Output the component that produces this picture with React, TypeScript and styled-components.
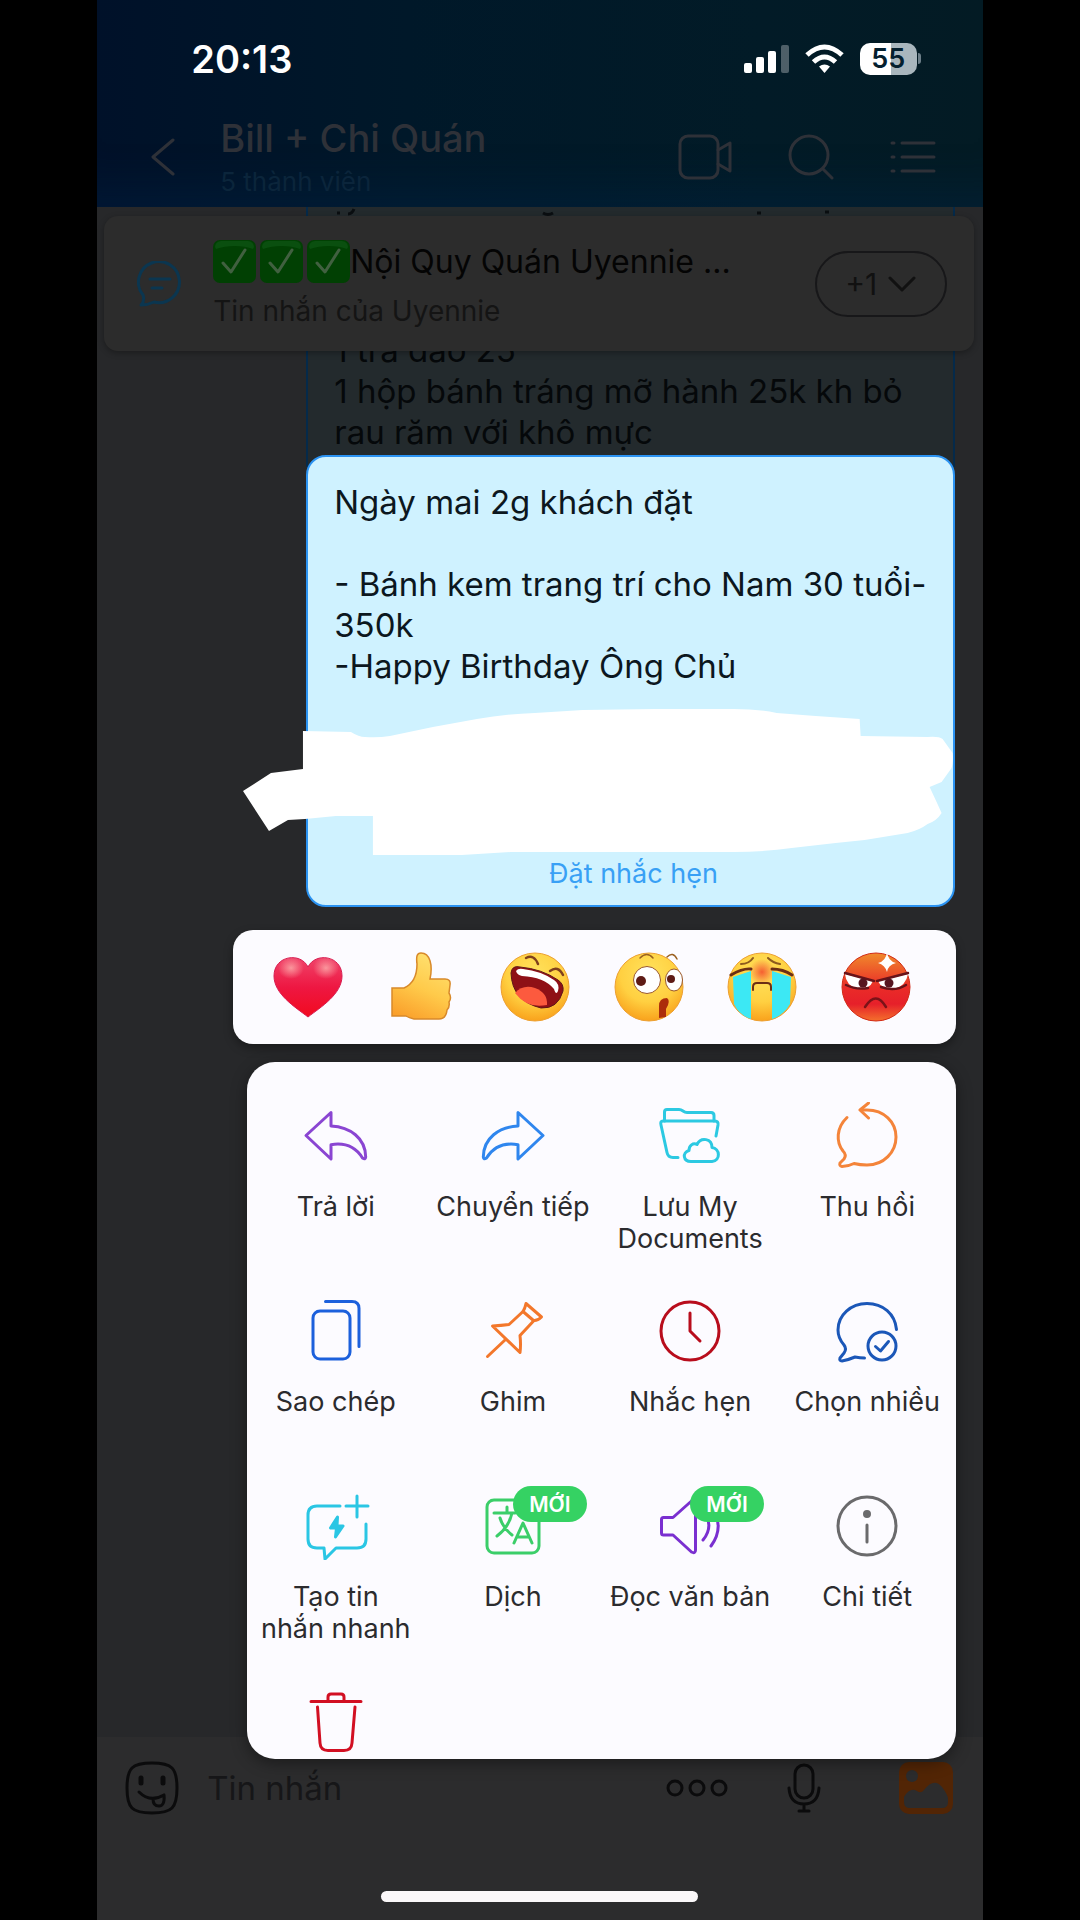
import React from "react";
import styled, { createGlobalStyle } from "styled-components";

const GlobalStyle = createGlobalStyle`
  * { box-sizing: border-box; }
  html, body { margin: 0; padding: 0; background: #000; }
  body { font-family: Inter, "Noto Sans", sans-serif; }
  button, input { font: inherit; color: inherit; background: none; border: 0; padding: 0; margin: 0; }
  svg { display: block; flex: none; }
  h1, h2, p { margin: 0; font-weight: 400; }
`;

const Page = styled.div`
  display: flex;
  justify-content: center;
  min-height: 100vh;
`;

const Phone = styled.div`
  position: relative;
  display: flex;
  flex-direction: column;
  width: 82%;
  background: #27282a;
`;

/* ---------- header ---------- */

const Header = styled.header`
  color: #2e3138;
  background: linear-gradient(90deg, #001129 0%, #001829 35%, #021b27 75%, #031b24 100%);
  box-shadow: inset 0 -60px 40px -40px rgba(0, 40, 80, 0.3);
`;

const StatusBar = styled.div`
  display: flex;
  align-items: center;
  justify-content: space-between;
  height: 117px;
  padding: 0 62px 0 94px;
  color: #fff;
`;

const Time = styled.time`
  font-size: 38px;
  line-height: 44px;
  font-weight: 600;
`;

const StatusIcons = styled.div`
  display: flex;
  align-items: center;
  gap: 16px;
`;

const Battery = styled.div`
  display: flex;
  align-items: center;
  gap: 1px;
`;

const BatteryBody = styled.div`
  width: 57px;
  height: 32px;
  border-radius: 10px;
  background: linear-gradient(90deg, #fff 54%, #a9b6bd 54%);
  color: #04202f;
  font-size: 27px;
  line-height: 32px;
  font-weight: 600;
  text-align: center;
`;

const BatteryNub = styled.div`
  width: 3px;
  height: 11px;
  border-radius: 0 4px 4px 0;
  background: #6d7f89;
`;

const NavBar = styled.nav`
  display: flex;
  align-items: center;
  height: 90px;
  padding: 0 47px 10px 54px;
`;

const Titles = styled.div`
  flex: 1;
  display: flex;
  flex-direction: column;
  gap: 6px;
  padding-left: 44px;
`;

const Title = styled.h1`
  font-size: 38px;
  line-height: 44px;
  font-weight: 500;
`;

const Members = styled.p`
  font-size: 26px;
  line-height: 32px;
  color: #0b253b;
`;

const NavActions = styled.div`
  display: flex;
  align-items: center;
  gap: 56px;
`;

const IconButton = styled.button`
  display: flex;
  align-items: center;
`;

/* ---------- conversation ---------- */

const Conversation = styled.main`
  position: relative;
  flex: 1;
`;

const Pinned = styled.section`
  position: absolute;
  top: 9px;
  left: 7px;
  right: 9px;
  display: flex;
  align-items: center;
  height: 135px;
  padding: 0 27px 0 33px;
  border-radius: 14px;
  background: #2c2c2c;
  box-shadow: 0 2px 6px rgba(0, 0, 0, 0.3);
`;

const PinnedText = styled.div`
  flex: 1;
  display: flex;
  flex-direction: column;
  gap: 12px;
  padding-left: 30px;
`;

const PinnedTitle = styled.h2`
  display: flex;
  align-items: center;
  font-size: 32px;
  line-height: 41px;
  color: #040404;
  white-space: nowrap;
`;

const Checks = styled.span`
  display: flex;
  gap: 4px;
`;

const PinnedSource = styled.p`
  font-size: 28px;
  line-height: 32px;
  color: #141414;
`;

const MorePins = styled.button`
  display: flex;
  align-items: center;
  justify-content: center;
  gap: 11px;
  width: 132px;
  height: 66px;
  border: 2px solid #171719;
  border-radius: 33px;
  font-size: 30px;
  color: #111;
`;

const OlderBubble = styled.div`
  margin: 0 28px 0 209px;
  height: 260px;
  padding: 123px 20px 0 26px;
  border: solid #052a4a;
  border-width: 0 2px;
  background: #232a2d;
  color: #05080a;
  font-size: 33px;
  line-height: 41px;
`;

const OlderTail = styled.svg`
  position: absolute;
  top: 0;
  left: 240px;
`;

/* ---------- composer ---------- */

const Composer = styled.footer`
  display: flex;
  flex-direction: column;
  align-items: center;
  justify-content: space-between;
  height: 183px;
  padding: 24px 29px 18px 28px;
  background: #2c2c2d;
`;

const ComposerRow = styled.form`
  display: flex;
  align-items: center;
  width: 100%;
`;

const MessageInput = styled.input`
  flex: 1;
  min-width: 0;
  padding-left: 28px;
  font-size: 33px;
  line-height: 41px;
  outline: none;
  &::placeholder { color: #161618; opacity: 1; }
`;

const ComposerActions = styled.div`
  display: flex;
  align-items: center;
  gap: 59px;
`;

const HomeIndicator = styled.div`
  width: 317px;
  height: 11px;
  border-radius: 6px;
  background: #fbf8f9;
`;

/* ---------- focused message overlay ---------- */

const Overlay = styled.div`
  position: absolute;
  inset: 0;
  padding: 455px 27px 0 136px;
`;

const FocusedBubble = styled.article`
  margin: 0 1px 0 73px;
  padding: 25px 20px 15px 26px;
  border: 2px solid #2b93f2;
  border-radius: 20px;
  background: #cff2ff;
  color: #0c171e;
`;

const MessageText = styled.p`
  font-size: 33px;
  line-height: 41px;
  white-space: pre-line;
`;

const Redaction = styled.svg`
  width: calc(100% + 111px);
  height: 148px;
  margin: 21px 0 2px -91px;
`;

const ReminderButton = styled.button`
  display: block;
  margin: 0 auto;
  font-size: 27px;
  line-height: 32px;
  color: #38a0f5;
`;

const Reactions = styled.div`
  display: flex;
  align-items: center;
  justify-content: space-between;
  height: 114px;
  margin-top: 23px;
  padding: 0 45px 0 40px;
  border-radius: 20px;
  background: #fcfbff;
  box-shadow: 0 4px 10px rgba(0, 0, 0, 0.35);
`;

const Menu = styled.div`
  display: grid;
  grid-template-columns: repeat(4, 1fr);
  grid-template-rows: repeat(3, 195px) 72px;
  margin: 18px 0 0 14px;
  padding-top: 40px;
  border-radius: 28px;
  background: #fcfbff;
  box-shadow: 0 4px 16px rgba(0, 0, 0, 0.4);
`;

const MenuItem = styled.button`
  display: flex;
  flex-direction: column;
  align-items: center;
  gap: 21px;
  font-size: 27px;
  line-height: 32px;
  color: #2b2b2e;
  text-align: center;
  white-space: pre;
`;

const IconBox = styled.span<{ $color: string }>`
  position: relative;
  color: ${(p) => p.$color};
`;

const NewBadge = styled.span`
  position: absolute;
  top: -6px;
  left: 34px;
  width: 74px;
  height: 36px;
  border-radius: 18px;
  background: #35d263;
  color: #fff;
  font-size: 21px;
  line-height: 38px;
  font-weight: 600;
`;

/* ---------- drawings ---------- */

const stroke = {
  fill: "none",
  stroke: "currentColor",
  strokeLinecap: "round" as const,
  strokeLinejoin: "round" as const,
};

function Check() {
  return (
    <svg width="43" height="43" viewBox="0 0 43 43" aria-hidden="true">
      <rect width="43" height="43" rx="7" fill="#014003" />
      <path d="M2 7a6 6 0 0 1 6-6h27a6 6 0 0 1 6 6l-1 2C30 5 14 5 3 9z" fill="#0a4f0f" />
      <path d="M10 23l8 9L32 10" {...stroke} stroke="#416040" strokeWidth="3" />
    </svg>
  );
}

type Action = {
  label: string;
  name?: string;
  color: string;
  isNew?: boolean;
  art: React.ReactNode;
};

const actions: Action[] = [
  {
    label: "Trả lời",
    color: "#8a45d2",
    art: <path d="M29 10.500L4 33.500 29 57V42.700C42 40.500 53 44 60.500 56q3 2 3.200-1C63.500 36 48 25 29 24z" />,
  },
  {
    label: "Chuyển tiếp",
    color: "#2f86ee",
    art: <path d="M39 10.500L64 33.500 39 57V42.700C26 40.500 15 44 7.500 56q-3 2-3.200-1C4.500 36 20 25 39 24z" />,
  },
  {
    label: "Lưu My\nDocuments",
    color: "#2cc9e2",
    art: (
      <>
        <path d="M8.500 19V10q0-2.500 2.500-2.500h12q2 0 4 1.500t4 1.500h24q3 0 3 3V19" />
        <path d="M22 55.500h-5q-5 0-6-5L5 23q-1-4 2-4h52q3.500 0 3 4l-2 11" />
        <path d="M35 59.500c-8 0-9-9-2-11 0-5 4-8 8-6 4-8 15-6 15 3 8 1 9 13 0 14z" />
      </>
    ),
  },
  {
    label: "Thu hồi",
    color: "#f4843a",
    art: (
      <>
        <path d="M14 15.500C3 26 3 40 10 49q4 4 1 8l-4 4q-1 3 2 3.500 6 0 12-3 6 1.500 13 1.500c17 0 29-13 29-28S51 8 34 8h-6" />
        <path d="M35.500 1L27 8l8.500 8" />
      </>
    ),
  },
  {
    label: "Sao chép",
    color: "#1c60dc",
    art: (
      <>
        <rect x="11" y="14" width="37" height="48" rx="7" />
        <path d="M23.500 4.500H50q7 0 7 7v38" />
      </>
    ),
  },
  {
    label: "Ghim",
    color: "#f3772b",
    art: (
      <>
        <path d="M47 6.500L62.500 20q-4 4-8 3.500L44 14.500q2-3 3-8z" />
        <path d="M44 14.500L30 27.500q-8 1-16.500 1.500L41 55.500q1-8 0-17l14-15" />
        <path d="M26 43L8.500 59.500" />
      </>
    ),
  },
  {
    label: "Nhắc hẹn",
    color: "#b80d1c",
    art: (
      <>
        <circle cx="34" cy="34" r="29" />
        <path d="M34 16v18l10 10" />
      </>
    ),
  },
  {
    label: "Chọn nhiều",
    color: "#1b57b8",
    art: (
      <>
        <path d="M63.500 32.500C62 17 50 6.500 34 6.500S5 18 5 33q0 8 6 15 3 4 0 8l-4 5q-1 3 2 3 6-1 13-4 5 1 9.500 1" />
        <circle cx="49" cy="49" r="14" />
        <path d="M42.500 49.500l5 4.500 8-9.500" />
      </>
    ),
  },
  {
    label: "Tạo tin\nnhắn nhanh",
    color: "#2ac6e4",
    art: (
      <>
        <path d="M38 14H15q-9 0-9 9v24q0 9 9 9h7l1 11 11-11h21q9 0 9-9V32" />
        <path d="M55 4v21M44 14h22" />
        <path d="M35.500 25l-7 11h6l-1 9 7.500-11h-6z" fill="currentColor" />
      </>
    ),
  },
  {
    label: "Dịch",
    color: "#3bce69",
    isNew: true,
    art: (
      <>
        <rect x="8" y="8" width="52" height="53" rx="7" />
        <path d="M15 21h21M28 15v6M33 21q-3 14-15 23M21 26q3 10 12 17M35 51l9-20 9 20M38 45h12" />
      </>
    ),
  },
  {
    label: "Đọc văn bản",
    color: "#7a2fd0",
    isNew: true,
    art: (
      <>
        <path d="M17 25.500H7.500q-2 0-2 2V41q0 2 2 2H17l18.500 17q4 2 4-2V10q0-4-4-1z" />
        <path d="M50 22q7 14-3 26M59 20q8 18-4 34" />
      </>
    ),
  },
  {
    label: "Chi tiết",
    color: "#6a6a6c",
    art: (
      <>
        <circle cx="34" cy="34" r="29" />
        <circle cx="34" cy="22" r="2.500" fill="currentColor" />
        <path d="M34 33v17" />
      </>
    ),
  },
  {
    label: "",
    name: "Xóa",
    color: "#d20f22",
    art: (
      <>
        <path d="M9 14.500h50M26 14V10q0-3 3-3h10q3 0 3 3v4" />
        <path d="M15.500 20L18 56q.500 7.500 8 7.500h16q7.500 0 8-7.500l3-36" />
      </>
    ),
  },
];

const reactions: { name: string; art: React.ReactNode }[] = [
  {
    name: "Yêu thích",
    art: (
      <>
        <path d="M35 65C22 55 1 42 1 24 1 3 28 0 35 15 42 0 69 3 69 24c0 18-21 31-34 41z" fill="url(#heart)" stroke="#d81b50" />
        <ellipse cx="18" cy="16" rx="13" ry="11" fill="url(#shine)" />
        <ellipse cx="53" cy="16" rx="13" ry="11" fill="url(#shine)" />
      </>
    ),
  },
  {
    name: "Thích",
    art: (
      <path
        d="M5 36h12c9-4 13-11 13-24C29 4 30 1 34 1c9 0 12 12 9 26h15q6 0 5 6l-1 8q3 5 0 9 1 5-2 8-1 9-8 9H27q-5-1-8-3H5z"
        fill="url(#thumb)"
        stroke="#d8892a"
        strokeWidth="1.500"
      />
    ),
  },
  {
    name: "Cười",
    art: (
      <>
        <circle cx="35" cy="35" r="34" fill="url(#face)" stroke="#eda032" />
        <path d="M11 21q1-8 9-6 22 2 38 13 6 4 5 11-5 18-22 17Q12 49 11 21z" fill="#8f1016" stroke="#5f1818" />
        <path d="M16 19q2-3 7-2 18 2 31 11 6 4 4 11-2 5-4-2Q44 25 22 24q-5-1-6-5z" fill="#fff" />
        <path d="M15 41q8-9 20-5 13 5 12 17-20 4-32-12z" fill="#fc5a3e" />
        <path d="M26 6q8-4 12 6M50 19q8-6 13 4" {...stroke} stroke="#80401c" strokeWidth="2.500" />
      </>
    ),
  },
  {
    name: "Ngạc nhiên",
    art: (
      <>
        <circle cx="35" cy="35" r="34" fill="url(#face)" stroke="#eda032" />
        <circle cx="33" cy="28" r="13.500" fill="#fff" stroke="#9a582c" />
        <ellipse cx="60" cy="28" rx="8.500" ry="11" fill="#fff" stroke="#9a582c" />
        <circle cx="27" cy="29" r="5" fill="#5e1b15" />
        <circle cx="57" cy="27" r="4" fill="#5e1b15" />
        <path d="M45 66V54q0-8 8-8 4 3-1 11v8z" fill="#ac2d0b" />
        <path d="M26 6q7-7 13 0M53 5q6-6 10 2" {...stroke} stroke="#9a6020" strokeWidth="1.500" />
      </>
    ),
  },
  {
    name: "Khóc",
    art: (
      <>
        <circle cx="35" cy="35" r="34" fill="url(#face)" stroke="#eda032" />
        <circle cx="35" cy="20" r="13" fill="url(#blush)" />
        <path d="M6 25l18-6v48Q12 63 7 52zM45 19l19 6-1 27q-6 11-18 15z" fill="#3ce8f4" />
        <path d="M4 23q12-7 20-6M45 17q11 0 20 6" {...stroke} stroke="#6b2e15" strokeWidth="3" />
        <path d="M14 12q8 0 12-6M41 6q5 5 12 6" {...stroke} stroke="#8d5a1e" strokeWidth="2" />
        <path d="M26 38v-3q0-4 4-4h10q4 0 4 4v3" {...stroke} stroke="#6b2e15" strokeWidth="2" />
      </>
    ),
  },
  {
    name: "Giận dữ",
    art: (
      <>
        <circle cx="35" cy="35" r="34" fill="url(#angry)" stroke="#d22a16" />
        <path d="M4 22l28 7q-3 8-15 8Q5 34 4 22zM67 22l-30 7q3 8 16 8 12-3 14-15z" fill="#fff" />
        <path d="M4 21l29 8M67 21l-31 8M5 33q10 5 22 3M40 35q14 5 25-2" {...stroke} stroke="#671319" strokeWidth="2.500" />
        <circle cx="22" cy="31" r="4.500" fill="#571620" />
        <circle cx="48" cy="31" r="4.500" fill="#571620" />
        <path d="M24 55q11-17 21 0" {...stroke} stroke="#7b1318" strokeWidth="2.500" />
        <path d="M46 0q1 9 9 11-8 2-9 9-2-7-9-9 8-2 9-11z" fill="#fff" />
      </>
    ),
  },
];

const GradientDefs = styled.svg`
  position: absolute;
`;

function ReactionGradients() {
  return (
    <GradientDefs width="0" height="0" aria-hidden="true">
      <defs>
        <linearGradient id="heart" x1="0" y1="0" x2="0" y2="1">
          <stop offset="0" stopColor="#f0446a" />
          <stop offset="0.5" stopColor="#ee1742" />
          <stop offset="1" stopColor="#f20a1f" />
        </linearGradient>
        <radialGradient id="shine">
          <stop offset="0" stopColor="#ffc0b8" stopOpacity="0.7" />
          <stop offset="1" stopColor="#ffc0b8" stopOpacity="0" />
        </radialGradient>
        <radialGradient id="blush">
          <stop offset="0" stopColor="#f4502c" stopOpacity="0.9" />
          <stop offset="1" stopColor="#f4502c" stopOpacity="0" />
        </radialGradient>
        <linearGradient id="thumb" x1="0.6" y1="0" x2="0.2" y2="1">
          <stop offset="0" stopColor="#ffe06e" />
          <stop offset="0.5" stopColor="#ffca4a" />
          <stop offset="1" stopColor="#fa9e2a" />
        </linearGradient>
        <radialGradient id="face" cx="0.5" cy="0.3" r="0.7">
          <stop offset="0" stopColor="#ffe25c" />
          <stop offset="0.6" stopColor="#ffd041" />
          <stop offset="1" stopColor="#f9a21c" />
        </radialGradient>
        <linearGradient id="angry" x1="0" y1="0" x2="0" y2="1">
          <stop offset="0" stopColor="#f08a2c" />
          <stop offset="0.5" stopColor="#ea2c28" />
          <stop offset="0.75" stopColor="#e6202a" />
          <stop offset="1" stopColor="#f4702c" />
        </linearGradient>
      </defs>
    </GradientDefs>
  );
}

const message = `Ngày mai 2g khách đặt

- Bánh kem trang trí cho Nam 30 tuổi-350k
-Happy Birthday Ông Chủ`;

export default function App() {
  return (
    <Page>
      <GlobalStyle />
      <Phone>
        <Header>
          <StatusBar>
            <Time>20:13</Time>
            <StatusIcons>
              <svg width="45" height="30" viewBox="0 0 45 30" fill="#fff" aria-hidden="true">
                <rect x="0" y="19" width="8" height="10" rx="2" />
                <rect x="12" y="13" width="8" height="16" rx="2" />
                <rect x="24" y="7" width="8" height="22" rx="2" />
                <rect x="37" y="1" width="8" height="28" rx="2" opacity=".3" />
              </svg>
              <svg width="39" height="30" viewBox="0 0 39 30" fill="none" stroke="#fff" strokeWidth="5" aria-hidden="true">
                <path d="M2 11Q19.500-5 37 11" />
                <path d="M8.500 18q11-10 22 0" />
                <path d="M14 22.500q5.500-4 11 0L19.500 29z" fill="#fff" stroke="none" />
              </svg>
              <Battery>
                <BatteryBody>55</BatteryBody>
                <BatteryNub />
              </Battery>
            </StatusIcons>
          </StatusBar>
          <NavBar>
            <IconButton aria-label="Quay lại">
              <svg width="25" height="38" viewBox="0 0 25 38" {...stroke} strokeWidth="3" aria-hidden="true">
                <path d="M22 2L2 19l20 17" />
              </svg>
            </IconButton>
            <Titles>
              <Title>Bill + Chi Quán</Title>
              <Members>5 thành viên</Members>
            </Titles>
            <NavActions>
              <IconButton aria-label="Gọi video">
                <svg width="54" height="46" viewBox="0 0 54 46" {...stroke} strokeWidth="3" aria-hidden="true">
                  <rect x="2" y="2" width="38" height="42" rx="8" />
                  <path d="M40 16l12-7v28l-12-7" />
                </svg>
              </IconButton>
              <IconButton aria-label="Tìm kiếm">
                <svg width="46" height="46" viewBox="0 0 46 46" {...stroke} strokeWidth="3" aria-hidden="true">
                  <circle cx="21" cy="21" r="19" />
                  <path d="M35 35l9 9" />
                </svg>
              </IconButton>
              <IconButton aria-label="Tùy chọn">
                <svg width="46" height="46" viewBox="0 0 46 46" {...stroke} strokeWidth="3" aria-hidden="true">
                  <path d="M12 9h32M12 23h32M12 37h32M2 9h2M2 23h2M2 37h2" />
                </svg>
              </IconButton>
            </NavActions>
          </NavBar>
        </Header>

        <Conversation>
          <OlderBubble>
            1 trà đào 25
            <br />1 hộp bánh tráng mỡ hành 25k kh bỏ rau răm với khô mực
          </OlderBubble>
          <OlderTail width="500" height="10" viewBox="0 0 500 10" fill="none" stroke="#0a0e11" strokeWidth="3" aria-hidden="true">
            <path d="M0 6h3M17 2q-2 5-6 5M206 6q5 3 10 0M420 6h4M488 5h4" />
          </OlderTail>
          <Pinned>
            <svg width="46" height="46" viewBox="0 0 46 46" {...stroke} stroke="#0b3650" strokeWidth="3" aria-hidden="true">
              <path d="M4 44q4-4 2-10A20.500 20.500 0 1 1 17 41q-6 3-13 3z" />
              <path d="M13 18h20M15 27h10" />
            </svg>
            <PinnedText>
              <PinnedTitle>
                <Checks role="img" aria-label="✅✅✅">
                  <Check />
                  <Check />
                  <Check />
                </Checks>
                Nội Quy Quán Uyennie ...
              </PinnedTitle>
              <PinnedSource>Tin nhắn của Uyennie</PinnedSource>
            </PinnedText>
            <MorePins>
              +1
              <svg width="28" height="16" viewBox="0 0 28 16" {...stroke} strokeWidth="3" aria-hidden="true">
                <path d="M2 2l12 12L26 2" />
              </svg>
            </MorePins>
          </Pinned>
        </Conversation>

        <Composer>
          <ComposerRow onSubmit={(e) => e.preventDefault()}>
            <IconButton type="button" aria-label="Nhãn dán">
              <svg width="54" height="54" viewBox="0 0 54 54" {...stroke} stroke="#0b0b0c" strokeWidth="3" aria-hidden="true">
                <path d="M27 2c20 0 25 5 25 25s-5 25-25 25S2 47 2 27 7 2 27 2z" />
                <path d="M16 17v5M38 17v5" strokeWidth="5" />
                <path d="M14 31q11 11 25 3M28 38q0 7 6 7t5-11" />
              </svg>
            </IconButton>
            <MessageInput aria-label="Tin nhắn" placeholder="Tin nhắn" />
            <ComposerActions>
              <IconButton type="button" aria-label="Thêm">
                <svg width="62" height="20" viewBox="0 0 62 20" {...stroke} stroke="#0b0b0c" strokeWidth="3" aria-hidden="true">
                  <circle cx="9" cy="10" r="7" />
                  <circle cx="31" cy="10" r="7" />
                  <circle cx="53" cy="10" r="7" />
                </svg>
              </IconButton>
              <IconButton type="button" aria-label="Ghi âm">
                <svg width="34" height="50" viewBox="0 0 34 50" {...stroke} stroke="#0b0b0c" strokeWidth="3" aria-hidden="true">
                  <rect x="8" y="2" width="18" height="33" rx="9" />
                  <path d="M2 25q1 16 15 16t15-16M17 41v7M12 48h10" />
                </svg>
              </IconButton>
              <IconButton type="button" aria-label="Gửi ảnh">
                <svg width="74" height="54" viewBox="-18 0 74 54" aria-hidden="true">
                  <rect x="1" y="1" width="54" height="52" rx="10" fill="#522505" />
                  <circle cx="14" cy="15" r="6" fill="#2c2c2d" />
                  <path d="M6 36q6-10 13-6 4 3 7-1 10-13 18-3 6 8 6 12v3q0 6-6 6H12q-6 0-6-6z" fill="#2c2c2d" />
                </svg>
              </IconButton>
            </ComposerActions>
          </ComposerRow>
          <HomeIndicator />
        </Composer>

        <Overlay>
          <FocusedBubble>
            <MessageText>{message}</MessageText>
            <Redaction viewBox="243 708 710 148" preserveAspectRatio="none" fill="#fff" aria-hidden="true">
              <path d="M303 731l48 1q8 5 14 5 13 1 25-1l43-9 44-8q28-5 58-6l48-3 73-1h78q24 0 43 4l39 3 44 3 1 17 67 1q11-1 15 2l10 14q1 8-1 15l-10 14-12 5 7 15 5 11q-5 8-14 11-8 6-20 9l-43 7-29 3-44 5q-28 4-58 4H511l-49 3h-89v-39h-37l-31 3-17 1-19 11-26-40 28-18 32-4z" />
            </Redaction>
            <ReminderButton>Đặt nhắc hẹn</ReminderButton>
          </FocusedBubble>

          <ReactionGradients />
          <Reactions>
            {reactions.map((r) => (
              <IconButton key={r.name} aria-label={r.name}>
                <svg width="70" height="70" viewBox="0 0 70 70" aria-hidden="true">
                  {r.art}
                </svg>
              </IconButton>
            ))}
          </Reactions>

          <Menu>
            {actions.map((a) => (
              <MenuItem key={a.name ?? a.label} aria-label={a.name}>
                <IconBox $color={a.color}>
                  <svg width="68" height="68" viewBox="0 0 68 68" {...stroke} strokeWidth="3" aria-hidden="true">
                    {a.art}
                  </svg>
                  {a.isNew && <NewBadge>MỚI</NewBadge>}
                </IconBox>
                {a.label && <span>{a.label}</span>}
              </MenuItem>
            ))}
          </Menu>
        </Overlay>
      </Phone>
    </Page>
  );
}
